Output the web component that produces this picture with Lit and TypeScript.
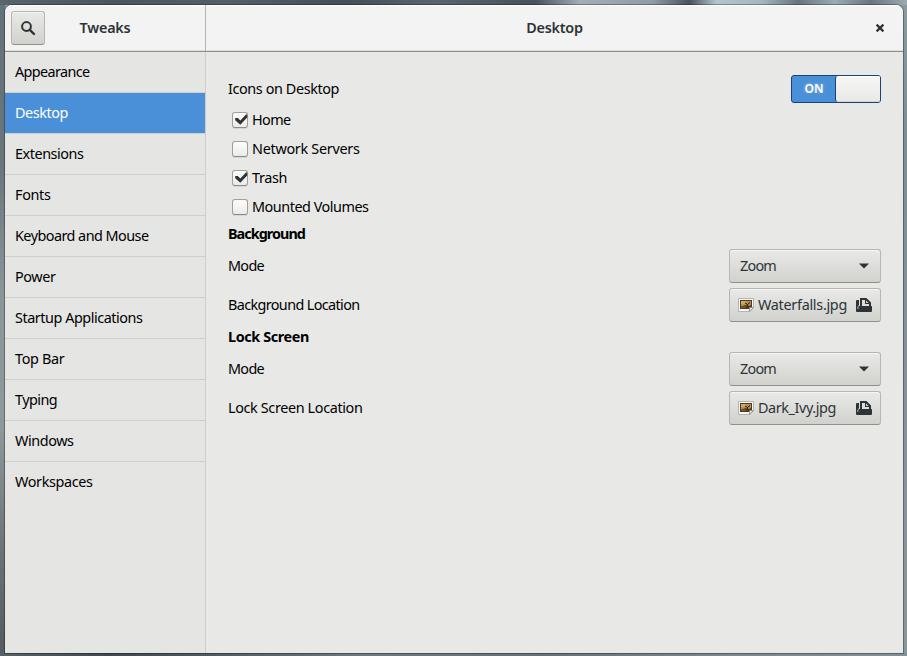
import { LitElement, html, css, svg, nothing } from "lit";
import { customElement, property } from "lit/decorators.js";

/** A single-line label whose tracking is adjusted so it spans `span` pixels. */
@customElement("fit-label")
class FitLabel extends LitElement {
  @property() text = "";
  @property({ type: Number }) span = 0;

  static styles = css`
    :host { display: inline-block; white-space: nowrap; }
    .text { display: inline-block; }
  `;

  firstUpdated() {
    const el = this.renderRoot.querySelector(".text") as HTMLElement;
    const natural = el.getBoundingClientRect().width;
    el.style.letterSpacing = (this.span - natural) / this.text.length + "px";
  }

  render() {
    return html`<span class="text">${this.text}</span>`;
  }
}

const label = (text: string, span: number) =>
  html`<fit-label .text=${text} .span=${span}></fit-label>`;

const pages: [string, number][] = [
  ["Appearance", 74.5], ["Desktop", 53], ["Extensions", 68.5], ["Fonts", 35.5],
  ["Keyboard and Mouse", 133.5], ["Power", 40.5], ["Startup Applications", 127.5],
  ["Top Bar", 49.5], ["Typing", 42], ["Windows", 58.5], ["Workspaces", 77.5],
];

const icons: [string, number, boolean][] = [
  ["Home", 38.5, true], ["Network Servers", 107.5, false],
  ["Trash", 35, true], ["Mounted Volumes", 116.5, false],
];

const searchIcon = svg`<svg class="icon" width="16" height="16" viewBox="0 0 16 16">
  <circle cx="6.5" cy="6.5" r="4.4" fill="none" stroke="#2e3436" stroke-width="2"/>
  <path d="M9.8 9.8 L14 14" stroke="#2e3436" stroke-width="2.4" stroke-linecap="round"/></svg>`;

const tick = svg`<svg class="tick" width="16" height="16" viewBox="0 0 16 16">
  <path d="M3.2 6 L5.8 6 L8.3 8.6 L14 2.5 L15.2 2.5 L15.2 5.6 L8.3 12.8 L3.2 8.2Z" fill="#2e3436"/></svg>`;

const imageIcon = svg`<svg class="icon" width="16" height="16" viewBox="0 0 16 16">
  <path d="M.5 1.5 H15.5 V11 L11.5 14.5 H.5Z" fill="#f7f7f5" stroke="#b4b5b0"/>
  <rect x="2" y="3" width="12" height="9" fill="#4a3a24"/>
  <path d="M3 4 H13 V8 L10 9.5 L8 8 L3 9.5Z" fill="#b98f4d"/>
  <path d="M3 4 H8 L7 7 H3Z" fill="#d3a85c"/>
  <path d="M3 9.5 H8 V11 H3Z" fill="#7b592c"/>
  <path d="M7 6 L9.5 7.5 L12 5.5 M9.5 7.5 L10 10" stroke="#20180f" fill="none"/>
  <path d="M15.5 10.5 H11.5 V14.5Z" fill="#e6e6e2" stroke="#8c8d88" stroke-width=".8"/></svg>`;

const openIcon = svg`<svg class="icon" width="16" height="16" viewBox="0 0 16 16">
  <path d="M0 4 Q0 3 1 3 H3 V8 L1.5 10 V13 H0Z" fill="#2e3436"/>
  <path d="M5 9 V2 H10 L14 6 V9" fill="none" stroke="#2e3436" stroke-width="2"/>
  <path d="M9 2 H10.5 L14 5.5 V7 H9Z" fill="#2e3436"/>
  <path d="M10 3.5 V6 H12.5Z" fill="#dcdcda"/>
  <path d="M3.5 9 H15.5 Q16 9 16 9.6 V14 Q16 15 15 15 H1 Q0 15 0 14 V12 H2.3 V10 Q2.3 9 3.5 9Z" fill="#2e3436"/></svg>`;

@customElement("app-root")
class AppRoot extends LitElement {
  static styles = css`
    * { box-sizing: border-box; }
    :host {
      display: block; width: 907px; height: 656px; padding: 5px 4px 3px 5px; box-sizing: border-box; overflow: hidden;
      font: 14.4px/20px "Noto Sans", "Open Sans", sans-serif; color: #000;
      background:
        linear-gradient(90deg, #58656a 0, #4a565b 13%, #536065 25%, #425056 38%, #58656a 48%, #48545a 58%, #46535a 59%, #a2b0b5 64%, #8e9da3 72%, #47555b 76%, #b3c5ca 79%, #a5b7bb 84%, #66757a 88%, #9badb2 92%, #68777d 96%, #9aabb1 100%) 0 0 / 100% 5px no-repeat,
        linear-gradient(90deg, #596267 0, #43484c 12%, #555e62 25%, #6f7a7d 40%, #677276 60%, #7c888b 80%, #829195 100%) 0 100% / 100% 3px no-repeat,
        linear-gradient(#64727a 0, #69767b 25%, #8b9699 45%, #8e999c 65%, #6c7376 84%, #555c61 100%) 0 0 / 5px 100% no-repeat,
        linear-gradient(#8a9ba2, #7d8e95 20%, #84939b 60%, #87979a);
    }
    .window {
      height: 648px; display: flex; flex-direction: column; overflow: hidden;
      border-radius: 7px 7px 0 0; background: #e8e8e6; box-shadow: 0 0 0 1px rgba(0, 0, 0, .3);
    }
    .header {
      height: 47px; flex: none; display: flex; color: #2e3436; font-weight: 600;
      background: #f3f3f3; border-bottom: 1px solid #8f8f89;
      box-shadow: inset 0 1px #fff, inset 0 -1px #dededb;
    }
    .header-left { width: 201px; padding: 6px; display: flex; border-right: 1px solid #b6b6b3; }
    .header-right { flex: 1; display: flex; align-items: center; padding: 0 18px 1px 28px; }
    .title { flex: 1; text-align: center; }
    .header-left .title { padding: 7px 34px 0 0; }
    .close { display: block; }
    .button {
      border: 1px solid #b6b6b3; border-bottom-color: #91918c; border-radius: 3px;
      background: linear-gradient(#e9e9e7, #d1d1ce); box-shadow: inset 0 1px #f5f5f4;
      display: flex; align-items: center; color: #2e3436;
    }
    .search { width: 34px; height: 34px; justify-content: center; }
    .icon { display: block; flex: none; }
    .body { flex: 1; display: flex; }
    .sidebar { width: 201px; background: #e5e5e3; border-right: 1px solid #cdcdca; }
    .page { height: 41px; padding: 10px 10px 0; border-bottom: 1px solid #cfcfcd; }
    .page:last-child { border-bottom: 0; }
    .page.active { background: #4a90d9; background-clip: padding-box; color: #fff; }
    .content { flex: 1; padding: 17px 22px 0; }
    .row { display: flex; align-items: center; justify-content: space-between; height: 39px; }
    .row.first { height: 40px; }
    .option { height: 29px; display: flex; align-items: center; gap: 4px; padding-left: 4px; }
    .options { height: 116px; margin-top: -4px; }
    .check {
      position: relative; width: 16px; height: 16px; border: 1px solid #a0a09b; border-bottom-color: #8c8c87;
      border-radius: 3px; background: linear-gradient(#fcfcfc, #ebebe9); box-shadow: 0 1px rgba(0, 0, 0, .08);
    }
    .tick { position: absolute; left: -1px; top: -1px; }
    .heading { height: 25px; line-height: 25px; font-weight: 700; }
    .switch {
      width: 90px; height: 28px; display: flex; border: 1px solid #184472; border-radius: 3px;
      background: #4a90d9; color: #fff; font: 600 12px/26px "Noto Sans", sans-serif; text-align: center;
    }
    .on { flex: 1; padding-left: 1px; text-shadow: 0 0 3px rgba(255, 255, 255, .5), 0 1px 1px rgba(0, 0, 0, .2); }
    .knob {
      width: 45px; border-left: 1px solid #184472; border-radius: 3px 2px 2px 3px;
      background: linear-gradient(#f6f6f5, #e8e8e6); box-shadow: inset 0 1px #fff, inset 0 -1px #d4d4d1;
    }
    .combo { width: 152px; height: 34px; padding: 0 11px 0 10px; justify-content: space-between; }
    .file { width: 152px; height: 34px; padding: 0 8px 0 8px; gap: 4px; }
    .name { flex: 1; }
    .background { height: 78px; }
  `;

  private select() {
    return html`<div class="button combo">${label("Zoom", 36)}
      <svg class="icon" width="10" height="6" viewBox="0 0 10 6"><path d="M0 .5 H10 L5 5.5Z" fill="#2e3436"/></svg></div>`;
  }

  private file(name: string, span: number) {
    return html`<div class="button file">${imageIcon}<span class="name">${label(name, span)}</span>${openIcon}</div>`;
  }

  render() {
    return html`<div class="window">
      <div class="header">
        <div class="header-left">
          <div class="button search">${searchIcon}</div>
          <div class="title">${label("Tweaks", 51)}</div>
        </div>
        <div class="header-right">
          <div class="title">${label("Desktop", 56.5)}</div>
          <svg class="close" width="10" height="10" viewBox="0 0 10 10">
            <path d="M1.6 1.6 L8.4 8.4 M8.4 1.6 L1.6 8.4" stroke="#2e3436" stroke-width="2.2"/></svg>
        </div>
      </div>
      <div class="body">
        <div class="sidebar">
          ${pages.map(([t, w]) => html`<div class="page ${t === "Desktop" ? "active" : ""}">${label(t, w)}</div>`)}
        </div>
        <div class="content">
          <div class="row first">${label("Icons on Desktop", 111)}
            <div class="switch"><span class="on">ON</span><span class="knob"></span></div>
          </div>
          <div class="options">
            ${icons.map(([t, w, on]) => html`<div class="option"><span class="check">${on ? tick : nothing}</span>${label(t, w)}</div>`)}
          </div>
          <div class="heading">${label("Background", 77)}</div>
          <div class="background">
            <div class="row">${label("Mode", 36)}${this.select()}</div>
            <div class="row">${label("Background Location", 131.5)}${this.file("Waterfalls.jpg", 89)}</div>
          </div>
          <div class="heading">${label("Lock Screen", 81)}</div>
          <div class="row">${label("Mode", 36)}${this.select()}</div>
          <div class="row">${label("Lock Screen Location", 134.5)}${this.file("Dark_Ivy.jpg", 78)}</div>
        </div>
      </div>
    </div>`;
  }
}
